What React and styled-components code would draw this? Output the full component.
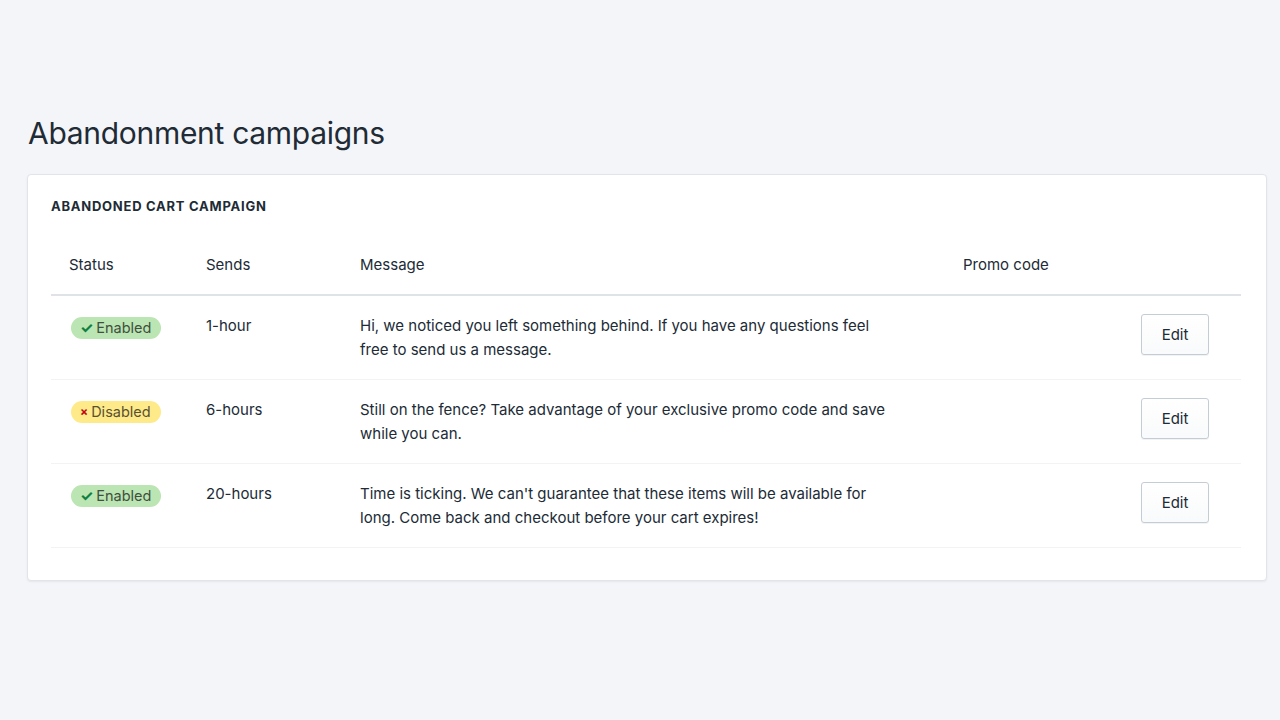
import React from 'react';
import styled, { createGlobalStyle } from 'styled-components';

const GlobalStyle = createGlobalStyle`
  html, body {
    margin: 0;
    padding: 0;
    background: #f4f5f8;
  }
  body {
    font-family: Inter, "Noto Sans", "Liberation Sans", sans-serif;
    color: #212b36;
    -webkit-font-smoothing: antialiased;
  }
`;

const Page = styled.main`
  min-height: 720px;
  box-sizing: border-box;
  padding: 112px 13px 40px 27px;
`;

const Title = styled.h1`
  margin: 0 0 20px 1px;
  font-size: 30px;
  line-height: 42px;
  font-weight: 400;
  letter-spacing: -0.3px;
  color: #212b36;
`;

const Card = styled.section`
  background: #fff;
  border: 1px solid #e1e4e8;
  border-radius: 4px;
  box-shadow: 0 1px 2px rgba(63, 63, 68, 0.08);
  padding: 21px 25px 32px 23px;
`;

const CardTitle = styled.h2`
  margin: 0 0 19px;
  font-size: 13px;
  line-height: 20px;
  font-weight: 700;
  letter-spacing: 0.75px;
  text-transform: uppercase;
  color: #212b36;
`;

const Table = styled.div`
  display: grid;
  grid-template-columns: 137px 154px 603px 1fr auto;
`;

const Row = styled.div`
  display: contents;
`;

const Cell = styled.div`
  padding: 18px 18px 17px;
  font-size: 15px;
  line-height: 24px;
  color: #212b36;
  border-bottom: ${(p) => (p.$head ? '2px solid #dfe3e8' : '1px solid #f1f3f5')};
  display: flex;
  align-items: flex-start;
  justify-content: ${(p) => (p.$end ? 'flex-end' : 'flex-start')};
`;

const Message = styled.span`
  max-width: 532px;
`;

const Badge = styled.span`
  display: inline-flex;
  align-items: center;
  gap: 3px;
  margin: 3px 0 0 2px;
  height: 22px;
  padding: 0 10px 0 9px;
  border-radius: 11px;
  font-size: 14.5px;
  line-height: 22px;
  background: ${(p) => (p.$on ? '#bbe5b3' : '#ffea8a')};
  color: ${(p) => (p.$on ? '#414f3e' : '#595130')};
`;

const Mark = styled.span`
  font-size: ${(p) => (p.$on ? '15px' : '12px')};
  font-weight: 700;
  color: ${(p) => (p.$on ? '#108043' : '#bf0711')};
`;

const EditButton = styled.button`
  margin: 0 14px 0 0;
  width: 68px;
  height: 41px;
  flex-shrink: 0;
  border: 1px solid #c4cdd5;
  border-radius: 3px;
  background: linear-gradient(180deg, #fff, #f9fafb);
  box-shadow: 0 1px 0 rgba(22, 29, 37, 0.05);
  font-family: inherit;
  font-size: 15px;
  color: #212b36;
  cursor: pointer;
`;

const campaigns = [
  {
    on: true,
    sends: '1-hour',
    message:
      'Hi, we noticed you left something behind. If you have any questions feel free to send us a message.',
  },
  {
    on: false,
    sends: '6-hours',
    message:
      'Still on the fence? Take advantage of your exclusive promo code and save while you can.',
  },
  {
    on: true,
    sends: '20-hours',
    message:
      "Time is ticking. We can't guarantee that these items will be available for long. Come back and checkout before your cart expires!",
  },
];

const App = () => (
  <>
    <GlobalStyle />
    <Page>
      <Title>Abandonment campaigns</Title>
      <Card>
        <CardTitle>Abandoned cart campaign</CardTitle>
        <Table>
          <Row>
            <Cell $head>Status</Cell>
            <Cell $head>Sends</Cell>
            <Cell $head>Message</Cell>
            <Cell $head>Promo code</Cell>
            <Cell $head />
          </Row>
          {campaigns.map((c) => (
            <Row key={c.sends}>
              <Cell>
                <Badge $on={c.on}>
                  <Mark $on={c.on}>{c.on ? '✓' : '×'}</Mark>
                  {c.on ? 'Enabled' : 'Disabled'}
                </Badge>
              </Cell>
              <Cell>{c.sends}</Cell>
              <Cell>
                <Message>{c.message}</Message>
              </Cell>
              <Cell />
              <Cell $end>
                <EditButton>Edit</EditButton>
              </Cell>
            </Row>
          ))}
        </Table>
      </Card>
    </Page>
  </>
);

export default App;
